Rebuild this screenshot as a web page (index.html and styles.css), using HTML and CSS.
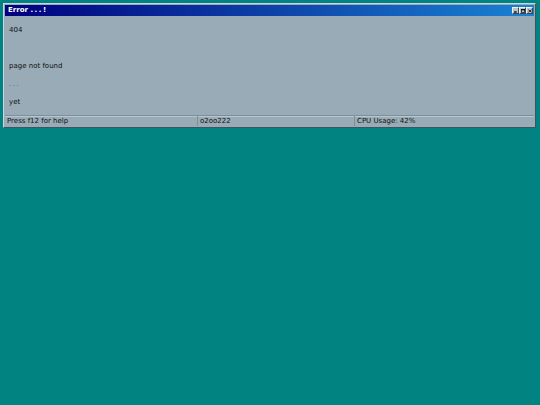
FILE: index.html
```html
<!DOCTYPE html>
<html>
<head>
<meta charset="utf-8">
<link rel="stylesheet" href="styles.css">
</head>
<body>
<div class="desktop">
  <div class="window">
    <div class="titlebar">
      <span class="title">Error <span class="dots">...</span>!</span>
      <div class="controls">
        <span class="btn"><svg width="6" height="5" viewBox="0 0 6 5"><rect x="0" y="3" width="4" height="2" fill="#000"/></svg></span>
        <span class="btn"><svg width="6" height="5" viewBox="0 0 6 5"><rect x="0.5" y="0.5" width="5" height="4" fill="none" stroke="#000"/><rect x="0" y="0" width="6" height="1.5" fill="#000"/></svg></span>
        <span class="btn"><svg width="6" height="5" viewBox="0 0 6 5"><path d="M0.5 0.5 L5.5 4.5 M5.5 0.5 L0.5 4.5" stroke="#000" stroke-width="1.2"/></svg></span>
      </div>
    </div>
    <div class="content">
      <div class="line">404</div>
      <div class="line"></div>
      <div class="line">page not found</div>
      <div class="line dim">...</div>
      <div class="line">yet</div>
    </div>
    <div class="statusbar">
      <div class="cell c1">Press f12 for help</div>
      <div class="cell c2">o2oo222</div>
      <div class="cell c3">CPU Usage: 42%</div>
    </div>
  </div>
</div>
</body>
</html>
```

FILE: styles.css
```css
html, body {
  margin: 0;
  padding: 0;
  background: #018481;
}
.desktop {
  width: 540px;
  height: 405px;
  padding: 3px;
  box-sizing: border-box;
  font-family: "DejaVu Sans", sans-serif;
}
.window {
  width: 533px;
  height: 125px;
  box-sizing: border-box;
  background: #98abb6;
  border-top: 1px solid #c8d6de;
  border-left: 1px solid #c8d6de;
  border-right: 1px solid #3e5560;
  border-bottom: 1px solid #3e5560;
  padding: 1px;
  display: flex;
  flex-direction: column;
}
.titlebar {
  height: 11px;
  background: linear-gradient(to right, #00007e, #1a82d2);
  display: flex;
  align-items: center;
  justify-content: space-between;
  padding: 0 1px 0 3px;
}
.title {
  color: #fff;
  font-weight: bold;
  font-size: 7px;
  line-height: 11px;
}
.dots {
  letter-spacing: 1.5px;
}
.controls {
  display: flex;
}
.btn {
  width: 7px;
  height: 7px;
  background: #b9c4ca;
  border-top: 1px solid #eef2f4;
  border-left: 1px solid #eef2f4;
  border-right: 1px solid #3b4a52;
  border-bottom: 1px solid #3b4a52;
  box-sizing: border-box;
  display: flex;
  align-items: center;
  justify-content: center;
}
.btn svg {
  display: block;
  width: 4px;
  height: 4px;
}
.content {
  flex: 1;
  padding: 5px 0 0 4px;
  font-size: 7px;
  color: #111;
}
.line {
  height: 18px;
  line-height: 18px;
}
.dim {
  color: #55656e;
  letter-spacing: 1.5px;
}
.statusbar {
  height: 10px;
  display: flex;
  font-size: 7px;
  color: #111;
  border-top: 1px solid #7d909a;
  box-shadow: inset 0 1px 0 #b8c7cf;
}
.cell {
  line-height: 10px;
  padding-left: 2px;
  box-sizing: border-box;
  border-right: 1px solid #7d909a;
}
.c1 { width: 193px; }
.c2 { width: 157px; }
.c3 { flex: 1; border-right: none; }
```
